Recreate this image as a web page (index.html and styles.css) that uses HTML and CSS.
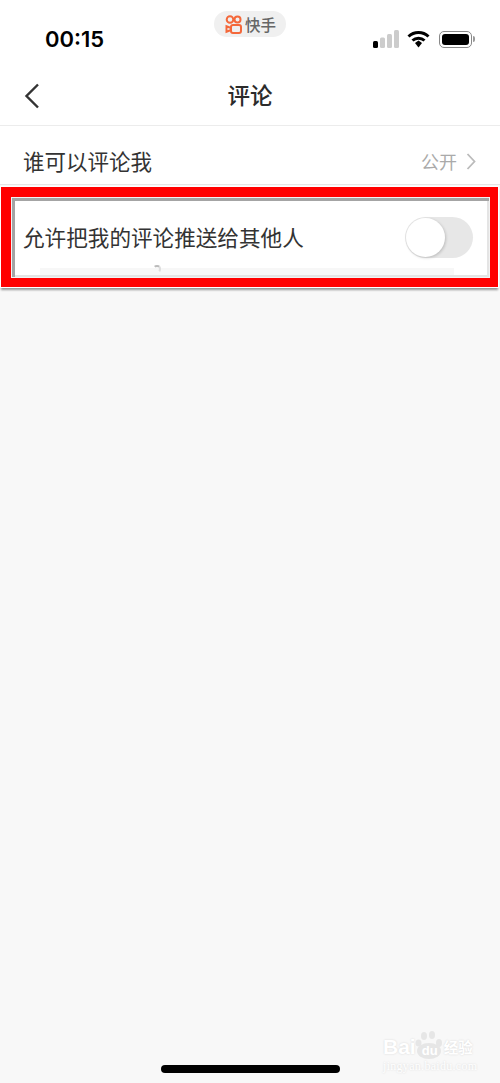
FILE: index.html
```html
<!DOCTYPE html>
<html lang="zh-CN">

<head>
    <meta charset="UTF-8">
    <meta name="viewport" content="width=device-width, initial-scale=1.0">
    <title>评论</title>
    <link rel="stylesheet" href="styles.css">
</head>

<body>
    <div class="page">
        <div class="status-bar">
            <span class="time">00:15</span>
            <div class="status-icons">
                <svg class="signal" width="26" height="18" viewBox="0 0 26 18">
                    <rect x="0" y="11" width="5" height="7" rx="1.5" fill="#000" />
                    <rect x="7" y="7.500" width="5" height="10.500" rx="1.500" fill="#ccc" />
                    <rect x="14" y="4" width="5" height="14" rx="1.500" fill="#ccc" />
                    <rect x="21" y="0" width="5" height="18" rx="1.500" fill="#ccc" />
                </svg>
                <svg class="wifi" width="23" height="18" viewBox="0 0 23 18">
                    <path d="M1.500 6.500a14.500 14.500 0 0 1 20 0" fill="none" stroke="#000" stroke-width="3" />
                    <path d="M5.500 10.500a8.800 8.800 0 0 1 12 0" fill="none" stroke="#000" stroke-width="3" />
                    <path d="M8 13l3.500-2.500L15 13l-3.500 4.500z" fill="#000" />
                </svg>
                <div class="battery">
                    <div class="battery-body">
                        <div class="battery-fill"></div>
                    </div>
                    <div class="battery-cap"></div>
                </div>
            </div>
        </div>

        <div class="app-pill">
            <svg width="17" height="19" viewBox="0 0 17 19" fill="none" stroke="#f4683a" stroke-width="2">
                <circle cx="5" cy="4.500" r="3.300" />
                <circle cx="12.500" cy="4.500" r="3" />
                <rect x="6" y="10" width="10" height="8" rx="2" />
                <path d="M6 13l-4.500-1.800v5.600L6 15" />
            </svg>
            <span>快手</span>
        </div>

        <div class="nav-bar">
            <svg class="back" width="16" height="26" viewBox="0 0 16 26">
                <path d="M14 1.500L2.500 13L14 24.500" fill="none" stroke="#333" stroke-width="2.400" />
            </svg>
            <div class="nav-title">评论</div>
        </div>

        <div class="row row-who">
            <span class="row-label">谁可以评论我</span>
            <div class="row-value">
                <span>公开</span>
                <svg width="10" height="17" viewBox="0 0 10 17">
                    <path d="M1.500 1l7 7.500-7 7.500" fill="none" stroke="#bbb" stroke-width="1.800" />
                </svg>
            </div>
        </div>

        <div class="highlight">
            <div class="highlight-inner">
                <div class="row-push">
                    <span class="row-label">允许把我的评论推送给其他人</span>
                    <div class="toggle">
                        <div class="knob"></div>
                    </div>
                </div>
                <div class="ghost-strip">
                    <div class="ghost-arc"></div>
                </div>
            </div>
        </div>

        <div class="home-bar"></div>

        <div class="watermark">
            <div class="wm-logo">
                <span>Bai</span>
                <span class="wm-paw">
                    <svg width="28" height="28" viewBox="0 0 28 28" fill="#e6e6e6">
                        <ellipse cx="3.500" cy="12" rx="3" ry="3.500" />
                        <ellipse cx="9" cy="5" rx="3" ry="4" />
                        <ellipse cx="17" cy="4" rx="3" ry="4" />
                        <ellipse cx="24" cy="12" rx="3" ry="4" />
                        <ellipse cx="14" cy="20" rx="12" ry="8" />
                    </svg>
                    <span class="wm-du">du</span>
                </span>
                <span class="wm-cn">经验</span>
            </div>
            <div class="wm-url">jingyan.baidu.com</div>
        </div>
    </div>
</body>

</html>
```

FILE: styles.css
```css
* {
    margin: 0;
    padding: 0;
    box-sizing: border-box;
}

body {
    font-family: "Liberation Sans", "Noto Sans CJK SC", sans-serif;
    background-color: #f8f8f8;
}

.page {
    position: relative;
    width: 500px;
    height: 1083px;
    overflow: hidden;
    background-color: #f8f8f8;
}

.status-bar {
    height: 70px;
    background-color: #fff;
    display: flex;
    justify-content: space-between;
    padding: 27px 25px 0 45px;
}

.time {
    font-family: Inter, "Liberation Sans", sans-serif;
    font-size: 22px;
    font-weight: 600;
    line-height: 25px;
    color: #000;
}

.status-icons {
    display: flex;
    align-items: flex-start;
    gap: 8px;
    padding-top: 3px;
    height: 26px;
}

.battery {
    display: flex;
    align-items: center;
    margin-left: 1px;
    height: 18px;
}

.battery-body {
    width: 33px;
    height: 17px;
    border: 1px solid #888;
    border-radius: 5px;
    padding: 2px;
}

.battery-fill {
    width: 100%;
    height: 100%;
    background-color: #000;
    border-radius: 3px;
}

.battery-cap {
    width: 2px;
    height: 6px;
    margin-left: 1px;
    background-color: #999;
    border-radius: 0 2px 2px 0;
}

.app-pill {
    position: absolute;
    top: 11px;
    left: 214px;
    width: 72px;
    height: 26px;
    border-radius: 13px;
    background-color: #f0f0f0;
    display: flex;
    align-items: center;
    gap: 3px;
    padding-left: 11px;
    font-size: 15.500px;
    font-weight: 500;
    color: #666;
}

.nav-bar {
    height: 56px;
    padding-bottom: 8px;
    background-color: #fff;
    border-bottom: 1px solid #ececec;
    display: flex;
    align-items: center;
    justify-content: center;
    position: relative;
}

.back {
    position: absolute;
    left: 24px;
    top: 13px;
}

.nav-title {
    font-size: 22.500px;
    font-weight: 500;
    color: #2b2b2b;
}

.row-who {
    height: 59px;
    padding: 10px 24px 0 23px;
    background-color: #fff;
    border-bottom: 1px solid #e6e6e6;
    display: flex;
    align-items: center;
    justify-content: space-between;
}

.row-label {
    font-size: 21.500px;
    color: #333;
}

.row-value {
    display: flex;
    align-items: center;
    gap: 9px;
    margin-top: 2px;
    font-size: 18px;
    color: #aaa;
}

.highlight {
    margin: 2px 2px 0 1px;
    height: 100px;
    padding: 10px 8px 9px 10px;
    background-color: #f00;
    box-shadow: 0 0 0 1px #fff, 0 3px 2px rgba(0, 0, 0, 0.4);
}

.highlight-inner {
    height: 100%;
    border: 1px solid #f2f2f2;
    background-color: #fff;
    box-shadow: inset 3px 3px 0 #a4a4a4, inset -2px -2px 0 #e4e4e4;
    display: flex;
    flex-direction: column;
}

.row-push {
    height: 70px;
    padding: 9px 16px 0 11px;
    display: flex;
    align-items: center;
    justify-content: space-between;
    flex-shrink: 0;
}

.row-push .row-label {
    margin-bottom: 3px;
    font-size: 21.600px;
}

.toggle {
    width: 68px;
    height: 41px;
    border-radius: 21px;
    background-color: #e7e7e7;
    padding: 1px;
}

.knob {
    width: 39px;
    height: 39px;
    border-radius: 50%;
    background-color: #fff;
    box-shadow: 1px 1px 3px rgba(0, 0, 0, 0.18);
}

.ghost-strip {
    position: relative;
    height: 7px;
    margin: 0 35px 0 28px;
    background-color: #f7f7f7;
}

.ghost-arc {
    position: absolute;
    left: 113px;
    top: -3px;
    width: 8px;
    height: 8px;
    border-radius: 50%;
    border: 2px solid transparent;
    border-top-color: #bbb;
    border-right-color: #ddd;
}

.home-bar {
    position: absolute;
    left: 161px;
    top: 1065px;
    width: 179px;
    height: 8px;
    border-radius: 4px;
    background-color: #000;
}

.watermark {
    position: absolute;
    left: 383px;
    top: 1029px;
    width: 100px;
    color: #fff;
    text-shadow: 0 0 2px #d4d4d4;
}

.wm-logo {
    display: flex;
    align-items: flex-end;
    height: 30px;
    font-size: 21px;
    font-weight: 700;
    line-height: 24px;
    white-space: nowrap;
}

.wm-paw {
    position: relative;
    display: block;
    width: 28px;
    height: 28px;
    margin: 0 1px 0 -1px;
}

.wm-paw svg {
    display: block;
}

.wm-du {
    position: absolute;
    left: 7px;
    top: 12px;
    font-size: 13px;
    line-height: 15px;
    text-shadow: none;
}

.wm-cn {
    font-size: 14.500px;
    line-height: 22px;
}

.wm-url {
    font-family: "Liberation Serif", serif;
    font-size: 12px;
    letter-spacing: 0.300px;
    line-height: 14px;
    white-space: nowrap;
}
```
